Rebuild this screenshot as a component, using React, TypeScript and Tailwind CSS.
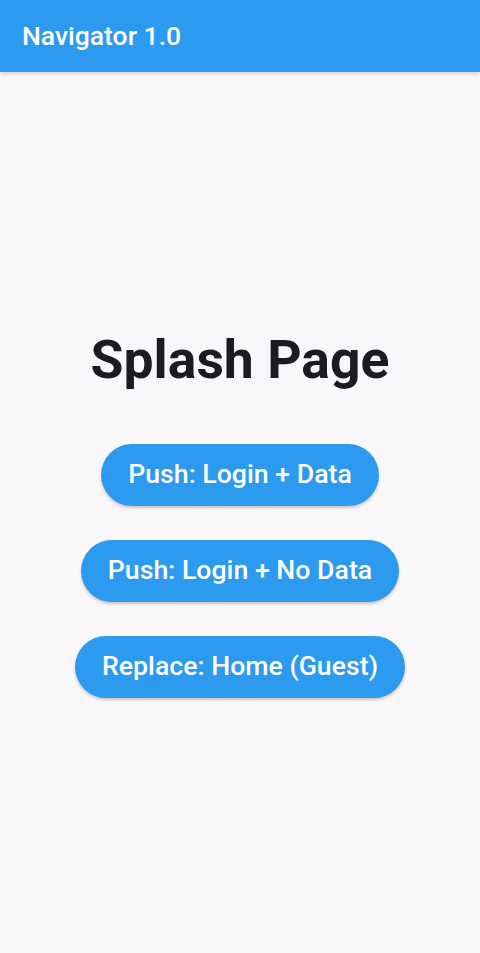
import React from 'react';

const buttons = ['Push: Login + Data', 'Push: Login + No Data', 'Replace: Home (Guest)'];

const App = () => {
  return (
    <div className="min-h-screen bg-[#f9f7fa] flex flex-col font-['Roboto',sans-serif]">
      <header className="h-[72px] bg-[#2c9aee] flex items-center px-[22px] shadow-[0_2px_4px_rgba(0,0,0,0.15)] z-10">
        <h1 className="text-white text-[26.5px] font-medium">Navigator 1.0</h1>
      </header>

      <main className="flex-1 flex flex-col items-center justify-center pt-[2px]">
        <h2 className="text-[53.5px] leading-[60px] font-bold text-[#1d1b20] mb-[54px]">Splash Page</h2>
        <div className="flex flex-col items-center gap-[34px]">
          {buttons.map(label => (
            <button
              key={label}
              className="h-[62px] px-[27px] rounded-full bg-[#2c9aee] text-white text-[26.7px] font-medium shadow-[0_2px_3px_rgba(0,0,0,0.2)]"
            >
              {label}
            </button>
          ))}
        </div>
      </main>
    </div>
  );
};

export default App;
